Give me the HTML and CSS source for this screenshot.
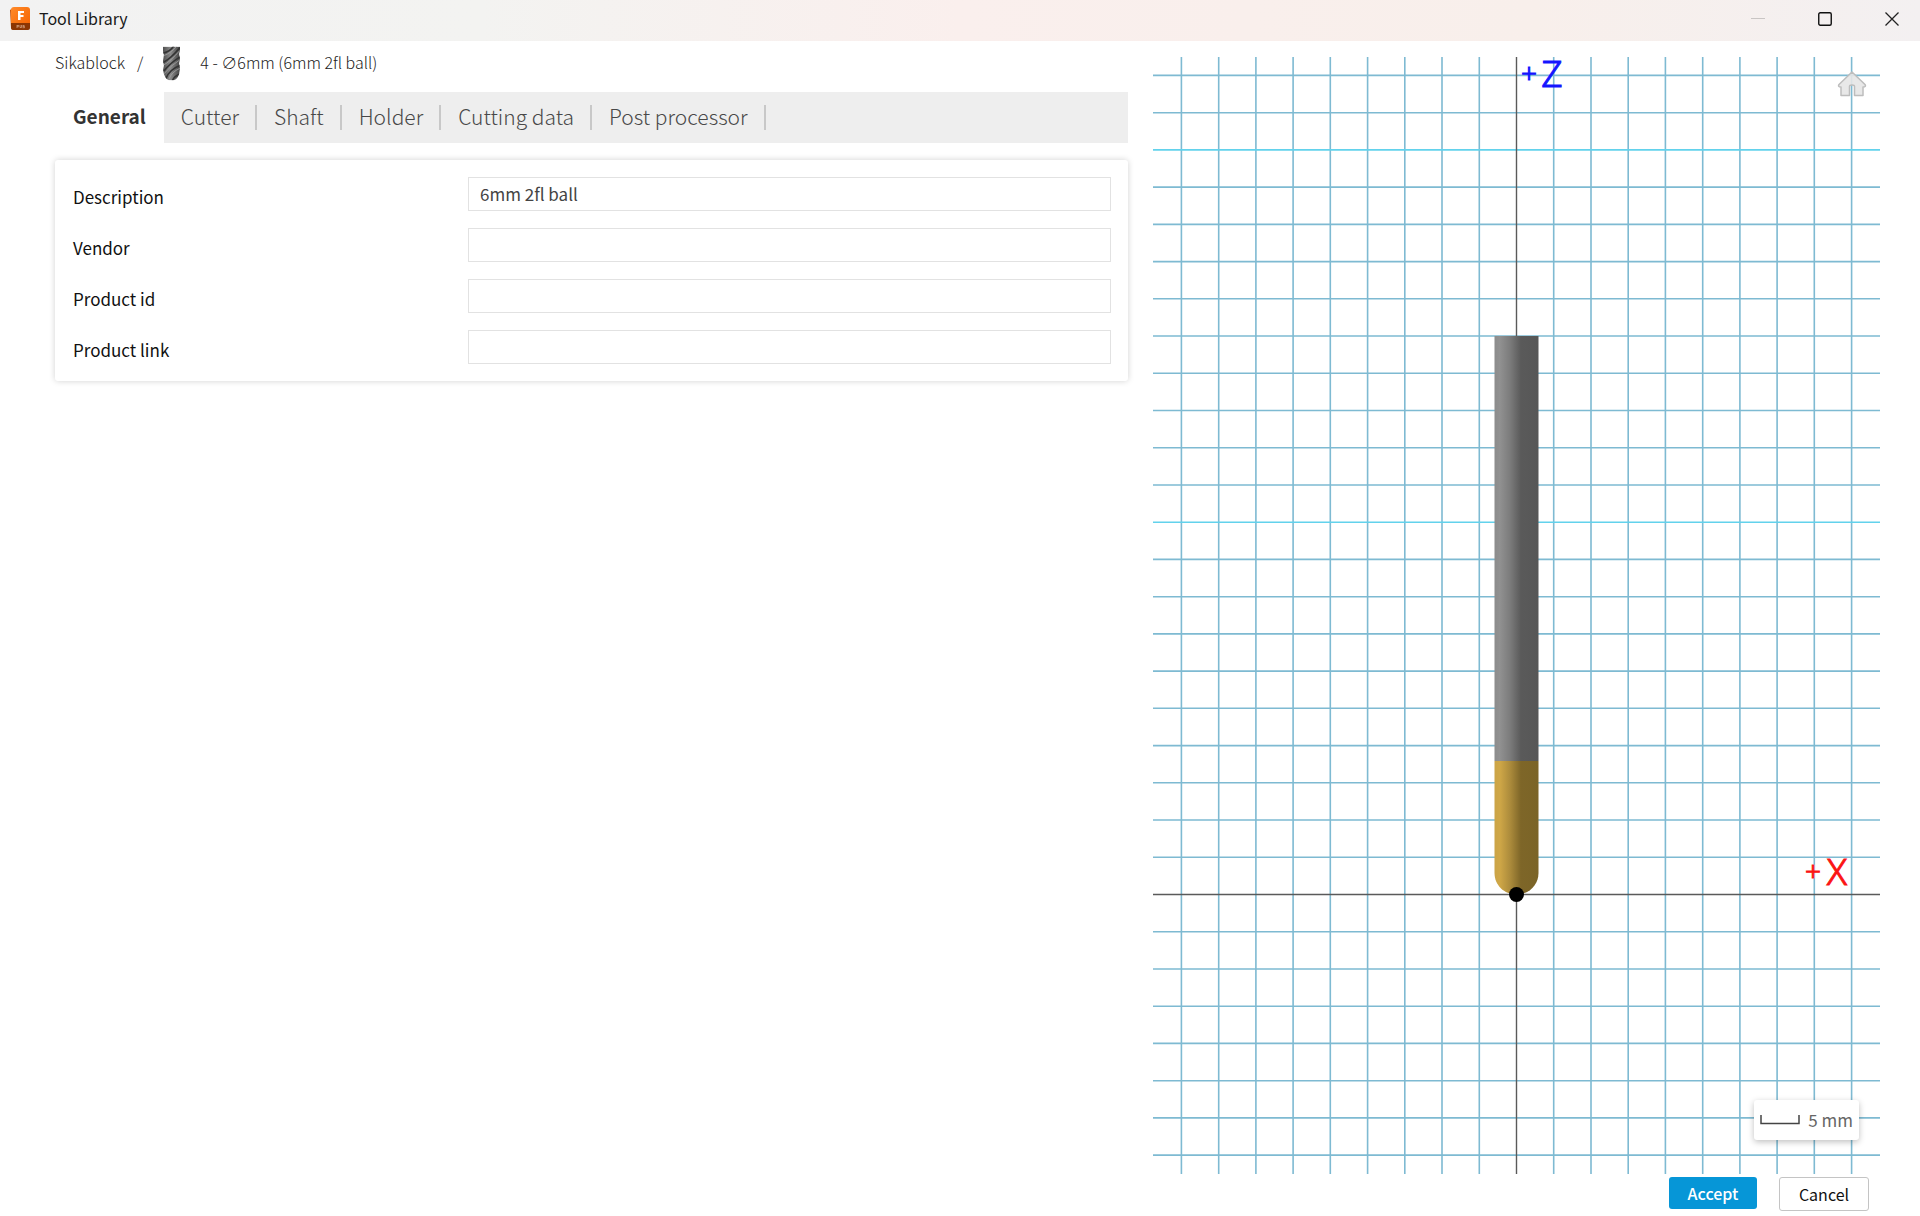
FILE: index.html
```html
<!DOCTYPE html>
<html lang="en">
<head>
<meta charset="utf-8">
<meta name="viewport" content="width=device-width, initial-scale=1">
<title>Tool Library</title>
<link rel="stylesheet" href="styles.css">
</head>
<body>
<header class="titlebar">
  <svg class="app-icon" width="21" height="24" viewBox="0 0 21 24" aria-hidden="true">
    <defs><linearGradient id="logo" x1="0" y1="0" x2="1" y2="1"><stop offset="0" stop-color="#ff8a2a"/><stop offset="1" stop-color="#f56200"/></linearGradient></defs>
    <path d="M0 3 3 1V23L1 21Z" fill="#c65208"/>
    <rect x="1" y="0" width="19" height="22" rx="3" fill="url(#logo)"/>
    <path d="M1 16H20V21Q20 23 18 23H3Q1 23 1 21Z" fill="#8c3603"/>
    <path d="M8 4H14V6H10.500V8H13.500V10H10.500V13H8Z" fill="#fff"/>
    <path d="M7 18V21M7 18.500H9M7 19.700H9M10 18V20.500H11.500V18M14.500 18.500H12.800V19.500H14.500V20.700H12.500" stroke="#d9a98a" stroke-width=".7" fill="none"/>
  </svg>
  <h1 class="title">Tool Library</h1>
  <div class="window-controls">
    <button class="window-button" type="button" aria-label="Minimize" disabled><svg width="14" height="14" viewBox="0 0 14 14"><path d="M0 6.500H14" stroke="#c9c5c4"/></svg></button>
    <button class="window-button" type="button" aria-label="Maximize"><svg width="14" height="14" viewBox="0 0 14 14"><rect x=".75" y=".75" width="12.500" height="12.500" rx="1.500" fill="none" stroke="#111" stroke-width="1.400"/></svg></button>
    <button class="window-button" type="button" aria-label="Close"><svg width="14" height="14" viewBox="0 0 14 14"><path d="M.5.5 13.500 13.500M13.500.5.5 13.500" stroke="#222" stroke-width="1.300"/></svg></button>
  </div>
</header>

<main class="workspace">
  <section class="editor">
    <nav class="breadcrumb" aria-label="Breadcrumb">
      <a class="crumb" href="#library">Sikablock</a>
      <span class="slash">/</span>
      <svg class="mill" width="17" height="35" viewBox="0 0 18 36" aria-hidden="true">
        <defs>
          <linearGradient id="mill-body"><stop offset="0" stop-color="#505050"/><stop offset=".45" stop-color="#8a8a8a"/><stop offset="1" stop-color="#444"/></linearGradient>
          <clipPath id="mill-clip"><path d="M0 0H18V4L17 8 18 13 17 18 18 23 17 29Q15 36 9 36 3 36 1 29L0 25 1 20 0 15 1 9 0 5Z"/></clipPath>
        </defs>
        <g clip-path="url(#mill-clip)">
          <rect width="18" height="36" fill="url(#mill-body)"/>
          <g fill="none" stroke="#333" stroke-width="1.700"><path d="M0 7Q9 5 12-2M0 17Q8 13 18 1M1 26Q7 18 18 11M3 34Q7 24 18 20M10 36Q12 31 18 29"/></g>
          <g fill="none" stroke="#a5a5a5" stroke-width=".8"><path d="M0 10Q9 7 15-1M0 20Q8 16 18 4M1 29Q7 21 18 14M6 35Q9 27 18 23"/></g>
        </g>
      </svg>
      <span>4 - ∅6mm (6mm 2fl ball)</span>
    </nav>

    <nav class="tabs" aria-label="Tool sections">
      <button class="tab tab-active" type="button" aria-current="page">General</button>
      <button class="tab" type="button">Cutter</button>
      <button class="tab" type="button">Shaft</button>
      <button class="tab" type="button">Holder</button>
      <button class="tab" type="button">Cutting data</button>
      <button class="tab" type="button">Post processor</button>
    </nav>

    <form class="card">
      <label class="label" for="description">Description</label>
      <input class="field" id="description" type="text" value="6mm 2fl ball">
      <label class="label" for="vendor">Vendor</label>
      <input class="field" id="vendor" type="text">
      <label class="label" for="product-id">Product id</label>
      <input class="field" id="product-id" type="text">
      <label class="label" for="product-link">Product link</label>
      <input class="field" id="product-link" type="text">
    </form>
  </section>

  <section class="preview">
    <div class="viewport">
      <svg class="scene" viewBox="0 0 727 1117" preserveAspectRatio="xMidYMid slice" role="img" aria-label="Ball end mill on a 5 mm grid">
        <defs>
          <linearGradient id="steel"><stop offset="0" stop-color="#8c8c8c"/><stop offset=".12" stop-color="#919191"/><stop offset=".35" stop-color="#7c7c7c"/><stop offset=".6" stop-color="#5a5a5a"/><stop offset="1" stop-color="#575757"/></linearGradient>
          <linearGradient id="gold"><stop offset="0" stop-color="#cba447"/><stop offset=".12" stop-color="#cfa747"/><stop offset=".35" stop-color="#ad8c3c"/><stop offset=".6" stop-color="#7e6628"/><stop offset="1" stop-color="#7b6427"/></linearGradient>
        </defs>
        <path class="grid-line" d="M28.400 0V1117M65.700 0V1117M102.900 0V1117M140.100 0V1117M177.300 0V1117M214.600 0V1117M251.800 0V1117M289 0V1117M326.300 0V1117M400.700 0V1117M438 0V1117M475.200 0V1117M512.400 0V1117M549.700 0V1117M586.900 0V1117M624.100 0V1117M661.300 0V1117M698.600 0V1117"/>
        <path class="grid-line" d="M0 18.400H727M0 55.700H727M0 130.100H727M0 167.400H727M0 204.600H727M0 241.800H727M0 279H727M0 316.300H727M0 353.500H727M0 390.700H727M0 428H727M0 502.400H727M0 539.700H727M0 576.900H727M0 614.100H727M0 651.300H727M0 688.600H727M0 725.800H727M0 763H727M0 800.300H727M0 874.700H727M0 912H727M0 949.200H727M0 986.400H727M0 1023.700H727M0 1060.900H727M0 1098.100H727"/>
        <path class="grid-line grid-line-major" d="M0 92.900H727M0 465.200H727"/>
        <path class="axis" d="M363.500 0V1117M0 837.500H727"/>
        <path d="M341.500 279H385.500V704H341.500Z" fill="url(#steel)"/>
        <path d="M341.500 704H385.500V816C385.500 828 376 837.500 363.500 837.500S341.500 828 341.500 816Z" fill="url(#gold)"/>
        <circle cx="363.500" cy="837.500" r="7.500"/>
        <g class="axis-name axis-z"><text class="axis-sign" x="376" y="26">+</text><text class="axis-letter" x="399" y="30">Z</text></g>
        <g class="axis-name axis-x"><text class="axis-sign" x="660" y="824">+</text><text class="axis-letter" x="684" y="828">X</text></g>
      </svg>
      <button class="home" type="button" aria-label="Home view">
        <svg width="30" height="26" viewBox="0 0 30 26"><path d="M15 1 28 13.500Q29.500 16 26 16V24.500H17.500V15.500Q17.500 14 15 14T12.500 15.500V24.500H4V16Q.5 16 2 13.500Z" fill="#e6e6e6" fill-opacity=".9" stroke="#bdbdbd" stroke-width="1.500" stroke-linejoin="round"/></svg>
      </button>
      <div class="scale">
        <svg width="40" height="10" viewBox="0 0 40 10" aria-hidden="true"><path d="M1 0V8.500H39V0" fill="none" stroke="#444" stroke-width="1.500"/></svg>
        <span>5 mm</span>
      </div>
    </div>
    <footer class="actions">
      <button class="button button-primary" type="button">Accept</button>
      <button class="button" type="button">Cancel</button>
    </footer>
  </section>
</main>
</body>
</html>
```
FILE: styles.css
```css
* {
  box-sizing: border-box;
}

body {
  margin: 0;
  min-height: 100vh;
  display: flex;
  flex-direction: column;
  background: #fff;
  color: #222;
  font-family: "Noto Sans CJK JP", "Noto Sans", sans-serif;
  font-size: 16px;
  line-height: 24px;
}

button,
input {
  font: inherit;
  color: inherit;
}

button {
  padding: 0;
  border: 0;
  background: none;
}

svg {
  display: block;
}

.titlebar {
  display: flex;
  align-items: center;
  height: 41px;
  padding: 0 0 4px 10px;
  background: linear-gradient(90deg, #f2f2f2 0%, #f3f3f1 25%, #faefed 50%, #f8efeb 80%, #f3f0f1 100%);
}

.title {
  flex: 1;
  margin: 0 0 2px 8px;
  font-size: 16px;
  font-weight: 400;
  color: #1a1a1a;
}

.window-controls {
  display: flex;
  align-self: stretch;
}

.window-button {
  display: grid;
  place-items: center;
  width: 67px;
}

.window-button:last-child {
  width: 56px;
  margin-left: 6px;
}

.workspace {
  flex: 1;
  display: grid;
  grid-template-columns: 1073fr 727fr;
  column-gap: 25px;
  padding: 0 40px 0 55px;
}

.breadcrumb {
  display: flex;
  align-items: center;
  height: 51px;
  padding-bottom: 10px;
  font-weight: 300;
}

.crumb {
  color: inherit;
  text-decoration: none;
}

.slash {
  margin: 0 20px 0 12px;
}

.mill {
  margin: 4px 20px 0 0;
}

.tabs {
  display: flex;
  height: 51px;
  background: #eee;
}

.tab {
  display: flex;
  align-items: center;
  padding-bottom: 4px;
  color: #484848;
  font-size: 21px;
  font-weight: 300;
}

.tab::before {
  content: "";
  width: 17px;
}

.tab::after {
  content: "";
  width: 16px;
  height: 25px;
  margin-top: 4px;
  border-right: 2px solid #c8c8c8;
}

.tab-active {
  background: #fff;
  color: #333;
  font-size: 19px;
  font-weight: 700;
}

.tab-active::before {
  width: 18px;
}

.tab-active::after {
  border-right-color: transparent;
}

.card {
  display: grid;
  grid-template-columns: 395px 1fr;
  row-gap: 17px;
  margin-top: 17px;
  padding: 17px 17px 17px 18px;
  border-radius: 3px;
  box-shadow: 0 0 6px rgba(0, 0, 0, .18);
  font-size: 17px;
}

.label {
  padding-top: 8px;
  color: #111;
}

.field {
  width: 100%;
  height: 34px;
  padding: 0 11px 1px;
  border: 1px solid #e2e2e2;
  color: #444;
}

.preview {
  display: flex;
  flex-direction: column;
  padding-top: 16px;
}

.viewport {
  position: relative;
  flex: 1;
  display: grid;
  overflow: clip;
  overflow-clip-margin: 16px;
}

.scene {
  width: 100%;
  height: 100%;
  overflow: visible;
}

.grid-line {
  stroke: #7ebad2;
  stroke-width: 1.6;
}

.grid-line-major {
  stroke: #62d2ec;
}

.axis {
  stroke: #5a5a5a;
  stroke-width: 1.4;
}

.axis-name {
  font-family: "Noto Sans", sans-serif;
  font-weight: 300;
  text-anchor: middle;
  stroke-width: 1;
}

.axis-sign {
  font-size: 28px;
}

.axis-letter {
  font-size: 37px;
}

.axis-z {
  fill: #1414ff;
  stroke: #1414ff;
}

.axis-x {
  fill: #fb1414;
  stroke: #fb1414;
}

.home {
  position: absolute;
  top: 14px;
  right: 13px;
}

.scale {
  position: absolute;
  right: 21px;
  bottom: 34px;
  display: flex;
  align-items: center;
  gap: 8px;
  height: 40px;
  padding: 0 6px;
  border-radius: 3px;
  background: #fff;
  box-shadow: 0 2px 6px rgba(0, 0, 0, .25);
  color: #666;
  font-size: 17px;
}

.actions {
  display: flex;
  justify-content: flex-end;
  align-items: flex-start;
  gap: 22px;
  height: 42px;
  padding: 3px 11px 0 0;
}

.button {
  width: 90px;
  height: 34px;
  border: 1px solid #c4c4c4;
  border-radius: 3px;
  background: #fff;
  color: #111;
}

.button-primary {
  width: 88px;
  height: 32px;
  border: 0;
  background: #0696d7;
  color: #fff;
  font-weight: 500;
}
```
